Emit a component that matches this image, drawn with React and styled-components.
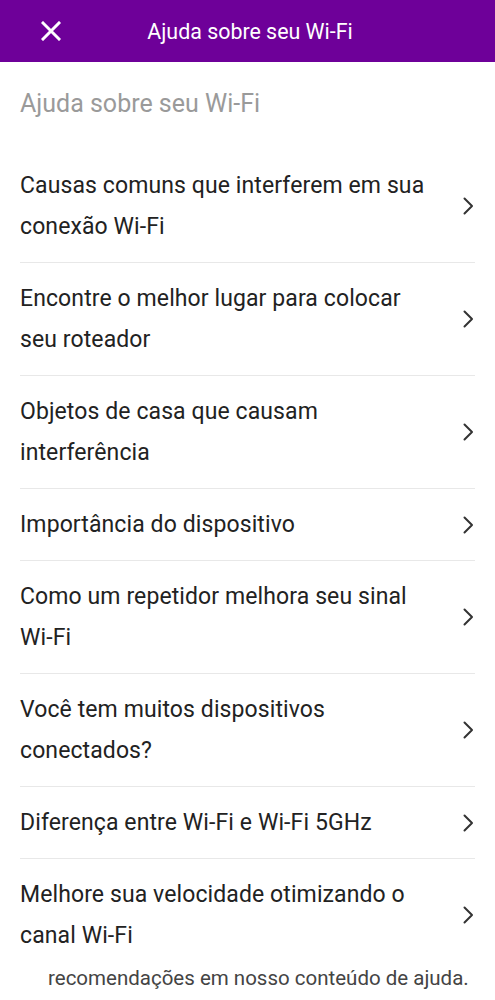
import styled, { createGlobalStyle } from 'styled-components';

const GlobalStyle = createGlobalStyle`
  html, body {
    margin: 0;
    padding: 0;
    background: #fff;
    font-family: Roboto, "Liberation Sans", sans-serif;
  }
`;

const Screen = styled.div`
  width: 495px;
  height: 1000px;
  overflow: hidden;
  display: flex;
  flex-direction: column;
`;

const TopBar = styled.header`
  height: 62px;
  background: #6e0099;
  display: flex;
  align-items: center;
  position: relative;
  flex-shrink: 0;
`;

const CloseButton = styled.button`
  background: none;
  border: none;
  padding: 0;
  margin-left: 40px;
  width: 22px;
  height: 22px;
  display: flex;
  align-items: center;
  justify-content: center;
  cursor: pointer;
`;

const BarTitle = styled.h1`
  position: absolute;
  left: 0;
  right: 0;
  text-align: center;
  margin: 0;
  font-size: 21.4px;
  font-weight: 400;
  color: #fff;
  pointer-events: none;
  padding-left: 5px;
`;

const Content = styled.main`
  padding: 18px 20px 0 20px;
`;

const PageTitle = styled.h2`
  margin: 0;
  font-size: 25px;
  font-weight: 400;
  color: #9a9a9a;
  line-height: 48px;
  padding-bottom: 22px;
`;

const List = styled.ul`
  list-style: none;
  margin: 0;
  padding: 0;
`;

const Row = styled.li`
  display: flex;
  align-items: center;
  justify-content: space-between;
  padding: 15px 0;
  border-bottom: ${(p) => (p.last ? 'none' : '1px solid #e8e8e8')};
  cursor: pointer;
`;

const RowText = styled.span`
  font-size: 23px;
  line-height: 41px;
  color: #222;
  max-width: 415px;
  letter-spacing: 0.1px;
`;

const Chevron = styled.svg`
  width: 12px;
  height: 20px;
  flex-shrink: 0;
  margin-right: 1px;
`;

const Footer = styled.p`
  margin: -13px 0 0 0;
  padding: 0 0 0 48px;
  font-size: 20.5px;
  line-height: 40px;
  color: #444;
`;

const items = [
  'Causas comuns que interferem em sua conexão Wi-Fi',
  'Encontre o melhor lugar para colocar seu roteador',
  'Objetos de casa que causam interferência',
  'Importância do dispositivo',
  'Como um repetidor melhora seu sinal Wi-Fi',
  'Você tem muitos dispositivos conectados?',
  'Diferença entre Wi-Fi e Wi-Fi 5GHz',
  'Melhore sua velocidade otimizando o canal Wi-Fi',
];

function ChevronIcon() {
  return (
    <Chevron viewBox="0 0 12 20">
      <path d="M2.5 2.5l7.5 7.5-7.5 7.5" fill="none" stroke="#333" strokeWidth="2" strokeLinecap="round" strokeLinejoin="round" />
    </Chevron>
  );
}

export default function App() {
  return (
    <Screen>
      <GlobalStyle />
      <TopBar>
        <CloseButton aria-label="Fechar">
          <svg width="20" height="20" viewBox="0 0 20 20">
            <path d="M2 2l16 16M18 2L2 18" stroke="#fff" strokeWidth="3" strokeLinecap="square" />
          </svg>
        </CloseButton>
        <BarTitle>Ajuda sobre seu Wi-Fi</BarTitle>
      </TopBar>
      <Content>
        <PageTitle>Ajuda sobre seu Wi-Fi</PageTitle>
        <List>
          {items.map((text, i) => (
            <Row key={text} last={i === items.length - 1}>
              <RowText>{text}</RowText>
              <ChevronIcon />
            </Row>
          ))}
        </List>
      </Content>
      <Footer>recomendações em nosso conteúdo de ajuda.</Footer>
    </Screen>
  );
}
